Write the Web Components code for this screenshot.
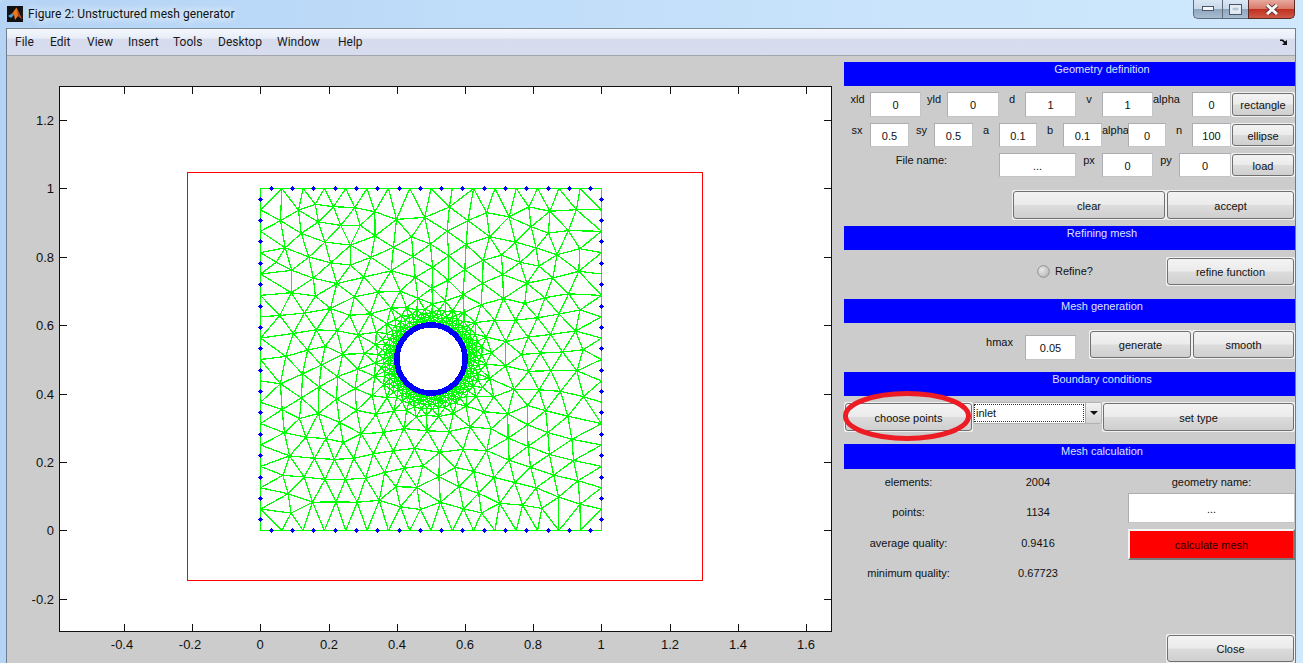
<!DOCTYPE html>
<html><head><meta charset="utf-8">
<style>
html,body{margin:0;padding:0;height:663px;overflow:hidden;background:#bcd8f6;font-family:"Liberation Sans",Arial,sans-serif;}
</style></head>
<body>
<m-window>
  <m-titlebar slot="title" text="Figure 2: Unstructured mesh generator"></m-titlebar>
  <m-menubar slot="menu"></m-menubar>
  <m-axes slot="left"></m-axes>
  <m-panel slot="right"></m-panel>
</m-window>
<script>
function tpl(html){const t=document.createElement('template');t.innerHTML=html;return t;}
function def(name,html,init){
  const t=tpl(html);
  customElements.define(name,class extends HTMLElement{
    constructor(){super();this.attachShadow({mode:'open'}).appendChild(t.content.cloneNode(true));}
    connectedCallback(){if(init&&!this._i){this._i=1;init(this);}}
  });
}
def('m-window',`<style>
:host{display:block;width:1303px;height:663px;overflow:hidden;box-sizing:border-box;background:linear-gradient(90deg,#b4d3f5 0,#bfdcf9 35%,#c9e4fb 70%,#cfe8fc 100%);border-top-left-radius:5px;}
.t{height:28px}
.f{margin:0 7px 0 6px;border-left:1px solid #6f7d8c;border-right:1px solid #6f7d8c}
.c{display:flex;background:#cccccc;height:607px}
.l{width:837px;flex:none}
.r{flex:1;min-width:0}
</style><div class="t"><slot name="title"></slot></div><div class="f"><slot name="menu"></slot><div class="c"><div class="l"><slot name="left"></slot></div><div class="r"><slot name="right"></slot></div></div></div>`);

def('m-titlebar',`<style>
:host{display:flex;height:28px;position:relative;font:12px Roboto,"Noto Sans",sans-serif;color:#111;align-items:center}
svg.logo{margin:0 5px 0 7px;flex:none}
.x{flex:1;text-shadow:0 0 8px #f2f9ff,0 0 8px #f2f9ff;margin-top:-1px;letter-spacing:.05px}
.btns{display:flex;height:19px;margin:0 8px 0 0;align-self:flex-start}
.b{border:1px solid #5e6b7a;border-top:0;box-sizing:border-box;display:flex;align-items:center;justify-content:center;background:linear-gradient(#dbe7f4 0,#c6d8ea 48%,#8fa6bd 52%,#a8bdd2 100%)}
.min{width:29px;border-radius:0 0 0 5px;border-right:0}
.max{width:26px;border-right:0}
.cl{width:47px;border-radius:0 0 5px 0;border-color:#5b2a26;background:linear-gradient(#e8a99e 0,#d67a6a 48%,#c2301f 52%,#cf5a48 100%)}
</style>
<svg class="logo" width="16" height="16" viewBox="0 0 16 16"><rect width="16" height="16" fill="#111"/><path d="M1 10 L5 7.5 L7 9 L4 12 Z" fill="#4a9fd0"/><path d="M5 7.5 L9.5 1.5 L15 13 L11 10 L8 14 L7 9 Z" fill="#e8791f"/><path d="M9.5 1.5 L15 13 L11 10 Z" fill="#b3411a"/></svg>
<span class="x"></span>
<div class="btns">
<div class="b min"><svg width="12" height="6"><rect x=".5" y=".5" width="11" height="4" fill="#f4f6f8" stroke="#4b5766"/></svg></div>
<div class="b max"><svg width="13" height="11"><rect x=".5" y=".5" width="12" height="10" fill="#dfe8f1" stroke="#4b5766"/><rect x="3" y="3" width="7" height="4" fill="#b4c6d8" stroke="#f4f6f8"/></svg></div>
<div class="b cl"><svg width="14" height="11" viewBox="0 0 14 11"><path d="M2 1 L12 10 M12 1 L2 10" stroke="#4a2a28" stroke-width="4.4"/><path d="M2 1 L12 10 M12 1 L2 10" stroke="#f7f7f7" stroke-width="3"/></svg></div>
</div>`,e=>{e.shadowRoot.querySelector('.x').textContent=e.getAttribute('text');});

def('m-menubar',`<style>
:host{display:flex;height:28px;box-sizing:border-box;border-top:1px solid #7e8a96;border-bottom:1px solid #a3a6aa;background:linear-gradient(#f4f7fc 0,#e8edf7 35%,#d6dcee 40%,#d7ddef 100%);font:12px Roboto,"Noto Sans",sans-serif;color:#1a1a1a;align-items:center;padding:0 7px 0 8px;position:relative}
span{flex:none}
svg{margin-left:auto}
</style><span style="width:35px">File</span><span style="width:37px">Edit</span><span style="width:41px">View</span><span style="width:45px">Insert</span><span style="width:45px">Tools</span><span style="width:59px">Desktop</span><span style="width:61px">Window</span><span>Help</span>
<svg width="8" height="7" viewBox="0 0 8 7"><path d="M0 0.5 H3 L5 2.5 L7 1 V6 H2 L4 4 L2 2 L0 2 Z" fill="#111"/></svg>`);

def('m-axes',`<style>:host{display:block;height:607px}svg{display:block}</style><svg width="837" height="607" viewBox="7 56 837 607" font-family="Liberation Sans,Arial,sans-serif" font-size="13" fill="#111"></svg>`,e=>{
  const svg=e.shadowRoot.querySelector('svg');
  const X=v=>260.5+341*v, Y=v=>530.5-342*v;
  let s=20041134;const R=()=>{s=(s*1664525+1013904223)>>>0;return s/4294967296;};
  const C=.5,rad=.1;
  const h=(x,y)=>{const d=Math.hypot(x-C,y-C);
    if(d<.15)return .0066+.18*Math.max(0,d-rad);
    return Math.min(.062,.0156+.7*(d-.15));};
  let pts=[];
  for(let k=0;k<16;k++){const v=k/16;pts.push([v,0],[1,v],[1-v,1],[0,1-v]);}
  for(let k=0;k<100;k++){const a=k/100*Math.PI*2;pts.push([C+rad*Math.cos(a),C+rad*Math.sin(a)]);}
  const nFixed=pts.length;
  const cand=[];
  for(let i=0;i<36000;i++){
    let x,y;
    if(i%3){const a=R()*6.2832,d=rad+Math.pow(R(),2)*.16;x=C+d*Math.cos(a);y=C+d*Math.sin(a);}
    else{x=R();y=R();}
    if(x<.025||x>.975||y<.025||y>.975)continue;
    const d=Math.hypot(x-C,y-C);if(d<rad+.003)continue;
    cand.push([x,y,d]);
  }
  cand.sort((a,b)=>a[2]-b[2]);
  for(const c of cand){
    const m=h(c[0],c[1])*.9;let ok=true;
    for(const p of pts){const dx=p[0]-c[0],dy=p[1]-c[1];if(dx*dx+dy*dy<m*m){ok=false;break;}}
    if(ok)pts.push([c[0],c[1]]);
  }
  function delaunay(P){
    const A=P.concat([[-10,-10],[12,-10],[.5,14]]);const n=P.length;
    let T=[];
    const mk=(a,b,c)=>{const ax=A[a][0],ay=A[a][1],bx=A[b][0],by=A[b][1],cx=A[c][0],cy=A[c][1];
      const d=2*(ax*(by-cy)+bx*(cy-ay)+cx*(ay-by));
      const ux=((ax*ax+ay*ay)*(by-cy)+(bx*bx+by*by)*(cy-ay)+(cx*cx+cy*cy)*(ay-by))/d;
      const uy=((ax*ax+ay*ay)*(cx-bx)+(bx*bx+by*by)*(ax-cx)+(cx*cx+cy*cy)*(bx-ax))/d;
      return {a,b,c,ux,uy,r:(ax-ux)**2+(ay-uy)**2};};
    T.push(mk(n,n+1,n+2));
    for(let i=0;i<n;i++){
      const px=A[i][0],py=A[i][1]+1e-9*i;const keep=[];const edges=new Map();
      for(const t of T){
        if((px-t.ux)**2+(py-t.uy)**2<t.r){
          for(const [u,v] of [[t.a,t.b],[t.b,t.c],[t.c,t.a]]){const k=u<v?u+'_'+v:v+'_'+u;edges.set(k,(edges.get(k)||0)+1);}
        } else keep.push(t);
      }
      T=keep;
      for(const [k,c] of edges){if(c===1){const [u,v]=k.split('_').map(Number);T.push(mk(u,v,i));}}
    }
    return T.filter(t=>t.a<n&&t.b<n&&t.c<n&&Math.abs((A[t.b][0]-A[t.a][0])*(A[t.c][1]-A[t.a][1])-(A[t.b][1]-A[t.a][1])*(A[t.c][0]-A[t.a][0]))>1e-7);
  }
  let T=delaunay(pts);
  for(let it=0;it<2;it++){
    const sx=new Float64Array(pts.length),sy=new Float64Array(pts.length),ct=new Float64Array(pts.length);
    for(const t of T){for(const [u,v] of [[t.a,t.b],[t.b,t.c],[t.c,t.a],[t.b,t.a],[t.c,t.b],[t.a,t.c]]){sx[u]+=pts[v][0];sy[u]+=pts[v][1];ct[u]++;}}
    for(let i=nFixed;i<pts.length;i++){if(ct[i]){pts[i]=[pts[i][0]*.5+.5*sx[i]/ct[i],pts[i][1]*.5+.5*sy[i]/ct[i]];}}
  }
  T=delaunay(pts);
  const seen=new Set();let d='';
  for(const t of T){
    const cx=(pts[t.a][0]+pts[t.b][0]+pts[t.c][0])/3,cy=(pts[t.a][1]+pts[t.b][1]+pts[t.c][1])/3;
    if(Math.hypot(cx-C,cy-C)<rad)continue;
    for(const [u,v] of [[t.a,t.b],[t.b,t.c],[t.c,t.a]]){
      const k=u<v?u+'_'+v:v+'_'+u;if(seen.has(k))continue;seen.add(k);
      d+=`M${X(pts[u][0]).toFixed(1)} ${Y(pts[u][1]).toFixed(1)}L${X(pts[v][0]).toFixed(1)} ${Y(pts[v][1]).toFixed(1)}`;
    }
  }
  let dots='';
  for(let k=0;k<16;k++){const v=(k+.5)/16;
    for(const [a,b] of [[v,0],[v,1],[0,v],[1,v]]){
      const x=Math.floor(X(a)),y=Math.floor(Y(b));
      dots+=`M${x-2} ${y}h5v1h-5zM${x-1} ${y-1}h3v3h-3zM${x} ${y-2}h1v5h-1z`;
    }
  }
  let ticks='',labels='';
  const xv=[-.4,-.2,0,.2,.4,.6,.8,1,1.2,1.4,1.6], yv=[-.2,0,.2,.4,.6,.8,1,1.2];
  const xp=v=>Math.round(260.4+341*v)+.5, yp=v=>Math.round(530.4-342*v)+.5;
  for(const v of xv){const x=xp(v);ticks+=`M${x} 86V94M${x} 632V624`;labels+=`<text x="${x-.5-(v<0?2:0)}" y="649" text-anchor="middle">${String(v)}</text>`;}
  for(const v of yv){const y=yp(v);ticks+=`M59.5 ${y}H67M831.5 ${y}H824`;labels+=`<text x="54" y="${y+4.5}" text-anchor="end">${String(v)}</text>`;}
  svg.innerHTML=`<rect x="59.5" y="86.5" width="772" height="545" fill="#fff"/>
  <path d="${d}" stroke="#00ff00" stroke-width="1.25" fill="none" shape-rendering="crispEdges"/>
  <rect x="260.5" y="188.5" width="341" height="342" fill="none" stroke="#00ff00" stroke-width="1" shape-rendering="crispEdges"/>
  <circle cx="431" cy="359" r="33" fill="#fff"/>
  <circle cx="431" cy="359" r="34.2" fill="none" stroke="#0000ff" stroke-width="5.6" shape-rendering="crispEdges"/>
  <path d="${dots}" fill="#0000ff" shape-rendering="crispEdges"/>
  <rect x="187.5" y="172.5" width="514.5" height="407.5" fill="none" stroke="#ff0000" stroke-width="1" shape-rendering="crispEdges"/>
  <rect x="59.5" y="86.5" width="772" height="545" fill="none" stroke="#111" stroke-width="1" shape-rendering="crispEdges"/>
  <path d="${ticks}" stroke="#111" stroke-width="1" shape-rendering="crispEdges"/>${labels}`;
});

const base=`font:11px "Liberation Sans",Arial,sans-serif;color:#111;`;
def('m-bar',`<style>:host{display:block;height:24px;background:#0000ff;color:#dfe3ff;text-align:center;font:11px "Liberation Sans",Arial,sans-serif;line-height:15px;padding-left:65px;box-sizing:border-box;}</style><slot></slot>`);
def('m-edit',`<style>:host{display:block;box-sizing:border-box;background:#fff;border:1px solid #abadb3;border-right-color:#c4c5c9;border-bottom-color:#c4c5c9;${base}text-align:center;height:25px;line-height:25px;flex:none}</style><slot></slot>`);
def('m-btn',`<style>:host{display:flex;box-sizing:border-box;flex:none;padding:1px;background:#f1f1f1;border-radius:2px;${base}}
div{flex:1;box-sizing:border-box;border:1px solid #707070;border-radius:3px;display:flex;align-items:center;justify-content:center;background:linear-gradient(#f3f3f3 0,#ebebeb 48%,#dcdcdc 52%,#cfcfcf 100%);padding-top:1px}</style><div><slot></slot></div>`);
def('m-lab',`<style>:host{display:block;flex:none;${base}text-align:center;line-height:13px;white-space:nowrap}</style><slot></slot>`);
def('m-row',`<style>:host{display:flex;align-items:flex-start;box-sizing:border-box}</style><slot></slot>`);

def('m-panel',`<style>
:host{display:block;box-sizing:border-box;height:607px;position:relative;padding:6px 0 0 0;width:451px;${base}}
</style>
<m-bar>Geometry definition</m-bar>
<m-row style="margin-top:6px;height:25px;">
  <m-lab style="width:26px;margin-top:1px;padding-left:1px;box-sizing:border-box">xld</m-lab><m-edit style="width:51px">0</m-edit>
  <m-lab style="width:26px;margin-top:1px">yld</m-lab><m-edit style="width:52px">0</m-edit>
  <m-lab style="width:26px;margin-top:1px">d</m-lab><m-edit style="width:51px">1</m-edit>
  <m-lab style="width:26px;margin-top:1px">v</m-lab><m-edit style="width:51px">1</m-edit>
  <m-lab style="width:39px;margin-top:1px;text-align:left;box-sizing:border-box">alpha</m-lab><m-edit style="width:39px">0</m-edit>
  <m-btn style="width:64px;height:25px">rectangle</m-btn>
</m-row>
<m-row style="margin-top:6px;height:24px">
  <m-lab style="width:26px;margin-top:1px">sx</m-lab><m-edit style="width:39px;height:24px;line-height:25px">0.5</m-edit>
  <m-lab style="width:25px;margin-top:1px">sy</m-lab><m-edit style="width:39px;height:24px;line-height:25px">0.5</m-edit>
  <m-lab style="width:26px;margin-top:1px">a</m-lab><m-edit style="width:38px;height:24px;line-height:25px">0.1</m-edit>
  <m-lab style="width:26px;margin-top:1px">b</m-lab><m-edit style="width:39px;height:24px;line-height:25px">0.1</m-edit>
  <m-lab style="width:26px;margin-top:1px">alpha</m-lab><m-edit style="width:38px;height:24px;line-height:25px">0</m-edit>
  <m-lab style="width:26px;margin-top:1px">n</m-lab><m-edit style="width:39px;height:24px;line-height:25px">100</m-edit>
  <m-btn style="width:64px;height:24px">ellipse</m-btn>
</m-row>
<m-row style="margin-top:6px;height:24px">
  <m-lab style="width:155px;margin-top:1px">File name:</m-lab><m-edit style="width:77px;height:24px;line-height:25px">...</m-edit>
  <m-lab style="width:26px;margin-top:1px">px</m-lab><m-edit style="width:51px;height:24px;line-height:25px">0</m-edit>
  <m-lab style="width:26px;margin-top:1px">py</m-lab><m-edit style="width:52px;height:24px;line-height:25px">0</m-edit>
  <m-btn style="width:64px;height:24px">load</m-btn>
</m-row>
<m-row style="margin-top:13px;height:30px;padding-left:168px">
  <m-btn style="width:154px;height:30px">clear</m-btn><m-btn style="width:129px;height:30px">accept</m-btn>
</m-row>
<m-bar style="margin-top:6px">Refining mesh</m-bar>
<m-row style="margin-top:7px;height:30px;padding-left:193px;align-items:flex-start">
  <svg width="13" height="13" viewBox="0 0 13 13" style="flex:none;margin-top:8px"><defs><radialGradient id="g" cx=".35" cy=".35" r=".8"><stop offset="0" stop-color="#e8e8e8"/><stop offset="1" stop-color="#b4b4b4"/></radialGradient></defs><circle cx="6.5" cy="6.5" r="5.8" fill="url(#g)" stroke="#8f8f8f"/></svg>
  <m-lab style="margin-left:5px;margin-top:8px;width:111px;text-align:left">Refine?</m-lab>
  <m-btn style="width:129px;height:29px">refine function</m-btn>
</m-row>
<m-bar style="margin-top:12px">Mesh generation</m-bar>
<m-row style="margin-top:7px;height:30px">
  <m-lab style="text-align:right;margin-top:6px;padding-right:12px;box-sizing:border-box;width:181px">hmax</m-lab>
  <m-edit style="width:51px;height:25px;margin-top:5px">0.05</m-edit>
  <m-btn style="width:103px;height:29px;margin-left:13px">generate</m-btn><m-btn style="width:103px;height:29px">smooth</m-btn>
</m-row>
<m-bar style="margin-top:12px">Boundary conditions</m-bar>
<m-row style="margin-top:6px;height:30px">
  <m-btn style="width:129px;height:30px">choose points</m-btn>
  <m-select style="width:129px"></m-select>
  <m-btn style="width:193px;height:30px">set type</m-btn>
</m-row>
<m-bar style="margin-top:12px;height:25px">Mesh calculation</m-bar>
<m-row style="margin-top:7px;height:13px">
  <m-lab style="width:129px">elements:</m-lab><m-lab style="width:130px">2004</m-lab><m-lab style="width:25px"></m-lab><m-lab style="width:167px;">geometry name:</m-lab>
</m-row>
<m-row style="height:30px;margin-top:4px">
  <m-lab style="width:129px;margin-top:13px">points:</m-lab><m-lab style="width:130px;margin-top:13px">1134</m-lab><m-lab style="width:25px"></m-lab><m-edit style="width:167px;height:30px;line-height:30px">...</m-edit>
</m-row>
<m-row style="height:31px;margin-top:6px;">
  <m-lab style="width:129px;margin-top:8px">average quality:</m-lab><m-lab style="width:130px;margin-top:8px">0.9416</m-lab><m-lab style="width:25px"></m-lab><m-red style="width:167px">calculate mesh</m-red>
</m-row>
<m-row style="height:13px;margin-top:7px">
  <m-lab style="width:129px">minimum quality:</m-lab><m-lab style="width:130px">0.67723</m-lab>
</m-row>
<m-row style="margin-top:54px;padding-left:322px;height:29px"><m-btn style="width:129px;height:29px">Close</m-btn></m-row>
<svg style="position:absolute;left:-8px;top:332px;pointer-events:none" width="144" height="58" viewBox="0 0 144 58"><ellipse cx="71" cy="28" rx="61.5" ry="22.5" fill="none" stroke="#ed1c24" stroke-width="5"/></svg>
`);
def('m-select',`<style>:host{display:flex;flex:none;box-sizing:border-box;height:22px;border:1px solid #b2b2b2;border-radius:2px;background:#fff;${base}}
.v{flex:1;margin:1px 1px 1px 0;border:1px dotted #333;line-height:16px;padding-left:1px;background:#fff}
.a{width:15px;flex:none;background:linear-gradient(#f3f3f3,#d2d2d2);border-left:1px solid #a8a8a8;display:flex;align-items:center;justify-content:center}</style>
<div class="v">inlet</div><div class="a"><svg width="8" height="4"><path d="M0 0H8L4 4Z" fill="#111"/></svg></div>`);
def('m-red',`<style>:host{display:flex;flex:none;box-sizing:border-box;height:31px;background:#ff0000;border:2px solid;border-color:#f6f6f6 #777 #777 #f6f6f6;${base}align-items:center;justify-content:center;padding-top:1px;color:#200}</style><slot></slot>`);
</script>
</body></html>
